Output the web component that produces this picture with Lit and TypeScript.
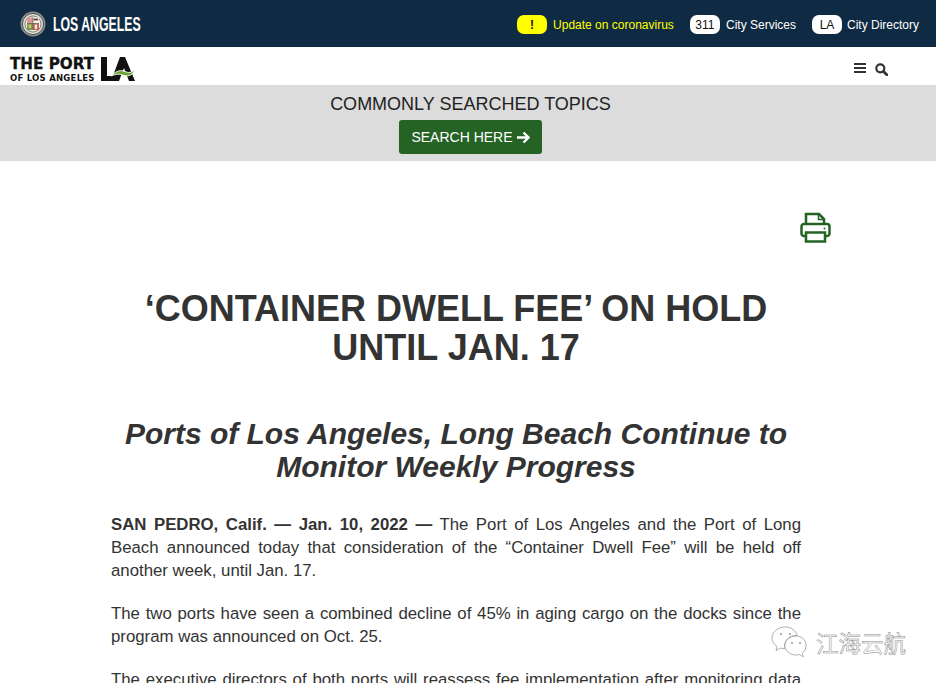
import { LitElement, html, css, svg } from 'lit';
import { customElement } from 'lit/decorators.js';

const sans = css`"Liberation Sans", Arial, sans-serif`;

// seal of the city, drawn small so only the rough colour areas matter
const seal = svg`
  <circle cx="13" cy="13" r="12.5" fill="#8e8f8c"/>
  <circle cx="13" cy="13" r="10.6" fill="#d9d8d2" stroke="#55564f" stroke-width="1"/>
  <circle cx="13" cy="13" r="8" fill="#f3efe6" stroke="#6f6f68" stroke-width=".8"/>
  <rect x="7" y="6.5" width="6" height="6" fill="#d99a94"/>
  <rect x="13" y="6.5" width="6" height="6" fill="#f4f2ec"/>
  <rect x="13.6" y="7.6" width="4.6" height="1.8" fill="#6d3b34"/>
  <rect x="7" y="12.5" width="6" height="6.5" fill="#6f9a55"/>
  <rect x="13" y="12.5" width="6" height="6.5" fill="#c9695d"/>
  <rect x="8.6" y="13.5" width="2.6" height="3.6" fill="#d7c25b"/>
  <rect x="14.8" y="13.6" width="2.2" height="4.2" fill="#f5efe4"/>
  <path d="M7 12.5h12M13 6.5v12.5" stroke="#5d5a52" stroke-width=".7"/>
`;

const wechat = svg`
  <g fill="#fff" fill-opacity=".6" stroke="#9a9a9a" stroke-width=".8">
    <path d="M14.500 1C7 1 1 5.900 1 12c0 3.400 1.900 6.400 5 8.400L5 24.500l4.500-2.500c1.300.4 2.600.6 4 .6h.6c-.3-1-.5-2-.5-3 0-5.700 5.200-10.200 11.500-10.200h1C24.800 4.500 20.100 1 14.500 1z"/>
    <path d="M25 10C19 10 14 14.100 14 19.500S19 29 25 29c1.200 0 2.300-.2 3.400-.5l3.800 2.300-.9-3.600c2.300-1.700 3.700-4.300 3.700-7.700C35 14.100 31 10 25 10z"/>
  </g>
  <g fill="#9a9a9a">
    <circle cx="10" cy="8" r="1.100"/><circle cx="19" cy="8" r="1.100"/>
    <circle cx="21" cy="17" r="1"/><circle cx="29" cy="17" r="1"/>
  </g>
`;

@customElement('app-root')
export class AppRoot extends LitElement {
  static styles = css`
    :host {
      display: block;
      position: relative;
      height: 683px;
      overflow: hidden;
      background: #fff;
      font-family: ${sans};
      color: #333;
    }

    .city-bar {
      height: 47px;
      background: #0f2a43;
      display: flex;
      align-items: center;
      justify-content: space-between;
      padding: 0 17px 0 20px;
    }

    .city-brand {
      display: flex;
      align-items: center;
      gap: 7px;
      color: #fff;
    }

    /* no condensed face installed, so squeeze the bold one */
    .city-name {
      font-size: 21px;
      font-weight: bold;
      transform: scaleX(.585);
      transform-origin: left center;
      white-space: nowrap;
    }

    .city-links {
      display: flex;
      align-items: center;
      padding-top: 2px;
      font-size: 12px;
      color: #fff;
    }

    .city-link {
      display: flex;
      align-items: center;
      gap: 6px;
      margin-left: 16px;
    }

    .city-link:last-child { gap: 5px; }

    .pill {
      height: 19px;
      min-width: 30px;
      padding: 0 5.5px;
      box-sizing: border-box;
      display: flex;
      align-items: center;
      justify-content: center;
      border-radius: 7px;
      background: #fff;
      color: #111;
      font-size: 12px;
    }

    .alert { color: #ffff00; }
    .alert .pill { background: #ffff00; font-weight: bold; }

    .port-bar {
      height: 38px;
      display: flex;
      align-items: center;
      justify-content: space-between;
      padding: 0 48px 0 10px;
    }

    .port-logo {
      display: flex;
      align-items: center;
      gap: 6px;
      margin-top: 6px;
      color: #111;
      font-weight: bold;
    }

    .port-words {
      display: flex;
      flex-direction: column;
      gap: 2px;
    }

    .port-the {
      font-family: "DejaVu Sans", sans-serif;
      font-size: 15.2px;
      line-height: 16px;
      font-weight: bold;
      -webkit-text-stroke: .3px #111;
      white-space: nowrap;
    }

    .port-of {
      font-family: "DejaVu Sans", sans-serif;
      font-size: 8.5px;
      line-height: 9px;
      font-weight: bold;
      letter-spacing: .25px;
      white-space: nowrap;
    }

    .nav-icons {
      display: flex;
      align-items: flex-start;
      gap: 9px;
      margin-top: 7px;
    }

    .search-band {
      height: 76px;
      background: #dcdcdc;
      display: flex;
      flex-direction: column;
      align-items: center;
      padding: 9px 0 0 5px;
      box-sizing: border-box;
    }

    .search-title {
      font-size: 18px;
      line-height: 21px;
      color: #222;
    }

    .search-btn {
      margin-top: 5px;
      height: 34px;
      width: 143px;
      box-sizing: border-box;
      display: flex;
      align-items: center;
      justify-content: center;
      gap: 4px;
      background: #256325;
      border-radius: 3px;
      color: #fff;
      font-size: 14px;
    }

    .article {
      width: 690px;
      margin-left: 111px;
    }

    .print-row {
      display: flex;
      justify-content: flex-end;
      padding-top: 51px;
      margin-right: -30px;
    }

    .title {
      margin: 46px 0 0;
      font-size: 36px;
      line-height: 39px;
      font-weight: bold;
      text-align: center;
      text-transform: uppercase;
    }

    .subtitle {
      margin: 50px 0 0;
      font-size: 30px;
      line-height: 33px;
      font-weight: bold;
      font-style: italic;
      text-align: center;
    }

    p {
      margin: 0 0 20px;
      font-size: 16.8px;
      line-height: 23px;
      text-align: justify;
    }

    .lead { margin-top: 30px; }

    .watermark {
      position: absolute;
      left: 771px;
      top: 625px;
      display: flex;
      align-items: center;
      gap: 9px;
      font-family: "Noto Sans CJK SC", sans-serif;
      font-size: 22.5px;
      line-height: 34px;
      color: #fff;
      -webkit-text-stroke: .5px #8a8a8a;
    }
  `;

  render() {
    return html`
      <header class="city-bar">
        <div class="city-brand">
          <svg width="26" height="26" viewBox="0 0 26 26">${seal}</svg>
          <span class="city-name">LOS ANGELES</span>
        </div>
        <nav class="city-links">
          <div class="city-link alert"><span class="pill">!</span>Update on coronavirus</div>
          <div class="city-link"><span class="pill">311</span>City Services</div>
          <div class="city-link"><span class="pill">LA</span>City Directory</div>
        </nav>
      </header>

      <div class="port-bar">
        <div class="port-logo">
          <div class="port-words">
            <span class="port-the">THE PORT</span>
            <span class="port-of">OF LOS ANGELES</span>
          </div>
          <svg width="35" height="26" viewBox="0 0 35 26">
            <path d="M0 1h6v19h8l-2 5H0z" fill="#111"/>
            <path d="M19 1h5l10 24h-6l-5-13-5 13h-8z" fill="#111"/>
            <path d="M10 20c6-6 10-6 14-4.500s6 1.500 10-2c-2 5-6 7.500-11 6s-7-2-13 .5z" fill="#6aa536" stroke="#fff" stroke-width=".9"/>
          </svg>
        </div>
        <div class="nav-icons">
          <svg width="12" height="10" viewBox="0 0 12 10">
            <path d="M0 0h12v2H0zM0 4h12v2H0zM0 8h12v2H0z" fill="#333"/>
          </svg>
          <svg width="13" height="13" viewBox="0 0 13 13" fill="none" stroke="#333">
            <circle cx="5.300" cy="5.300" r="4" stroke-width="2.200"/>
            <path d="M8.500 8.500l3.300 3.300" stroke-width="2.800" stroke-linecap="round"/>
          </svg>
        </div>
      </div>

      <div class="search-band">
        <div class="search-title">COMMONLY SEARCHED TOPICS</div>
        <div class="search-btn">
          SEARCH HERE
          <svg width="13" height="13" viewBox="0 0 13 13" fill="none" stroke="#fff" stroke-width="2.300">
            <path d="M0 6.500h11M6.500 1.500l5 5-5 5"/>
          </svg>
        </div>
      </div>

      <main class="article">
        <div class="print-row">
          <svg width="31" height="31" viewBox="0 0 31 31" fill="none" stroke="#256325" stroke-width="2.500">
            <path d="M6 12V2h13l5 5v5"/>
            <path d="M18.500 2v5.500H24" stroke-width="1.500"/>
            <path d="M6 24H3.500A2.500 2.500 0 0 1 1.500 22V14.500A2.500 2.500 0 0 1 4 12h23a2.500 2.500 0 0 1 2.500 2.500V22a2.500 2.500 0 0 1-2 2H25"/>
            <path d="M6 20.500h19V29.500H6z"/>
            <circle cx="24.500" cy="16.500" r="1" fill="#256325" stroke="none"/>
          </svg>
        </div>
        <h1 class="title">‘Container Dwell Fee’ on Hold Until Jan. 17</h1>
        <h2 class="subtitle">Ports of Los Angeles, Long Beach Continue to Monitor Weekly Progress</h2>
        <p class="lead"><strong>SAN PEDRO, Calif. — Jan. 10, 2022 —</strong> The Port of Los Angeles and the Port of Long Beach announced today that consideration of the “Container Dwell Fee” will be held off another week, until Jan. 17.</p>
        <p>The two ports have seen a combined decline of 45% in aging cargo on the docks since the program was announced on Oct. 25.</p>
        <p>The executive directors of both ports will reassess fee implementation after monitoring data over the coming week.</p>
      </main>

      <div class="watermark">
        <svg width="36" height="32" viewBox="0 0 36 32">${wechat}</svg>
        <span>江海云航</span>
      </div>
    `;
  }
}
